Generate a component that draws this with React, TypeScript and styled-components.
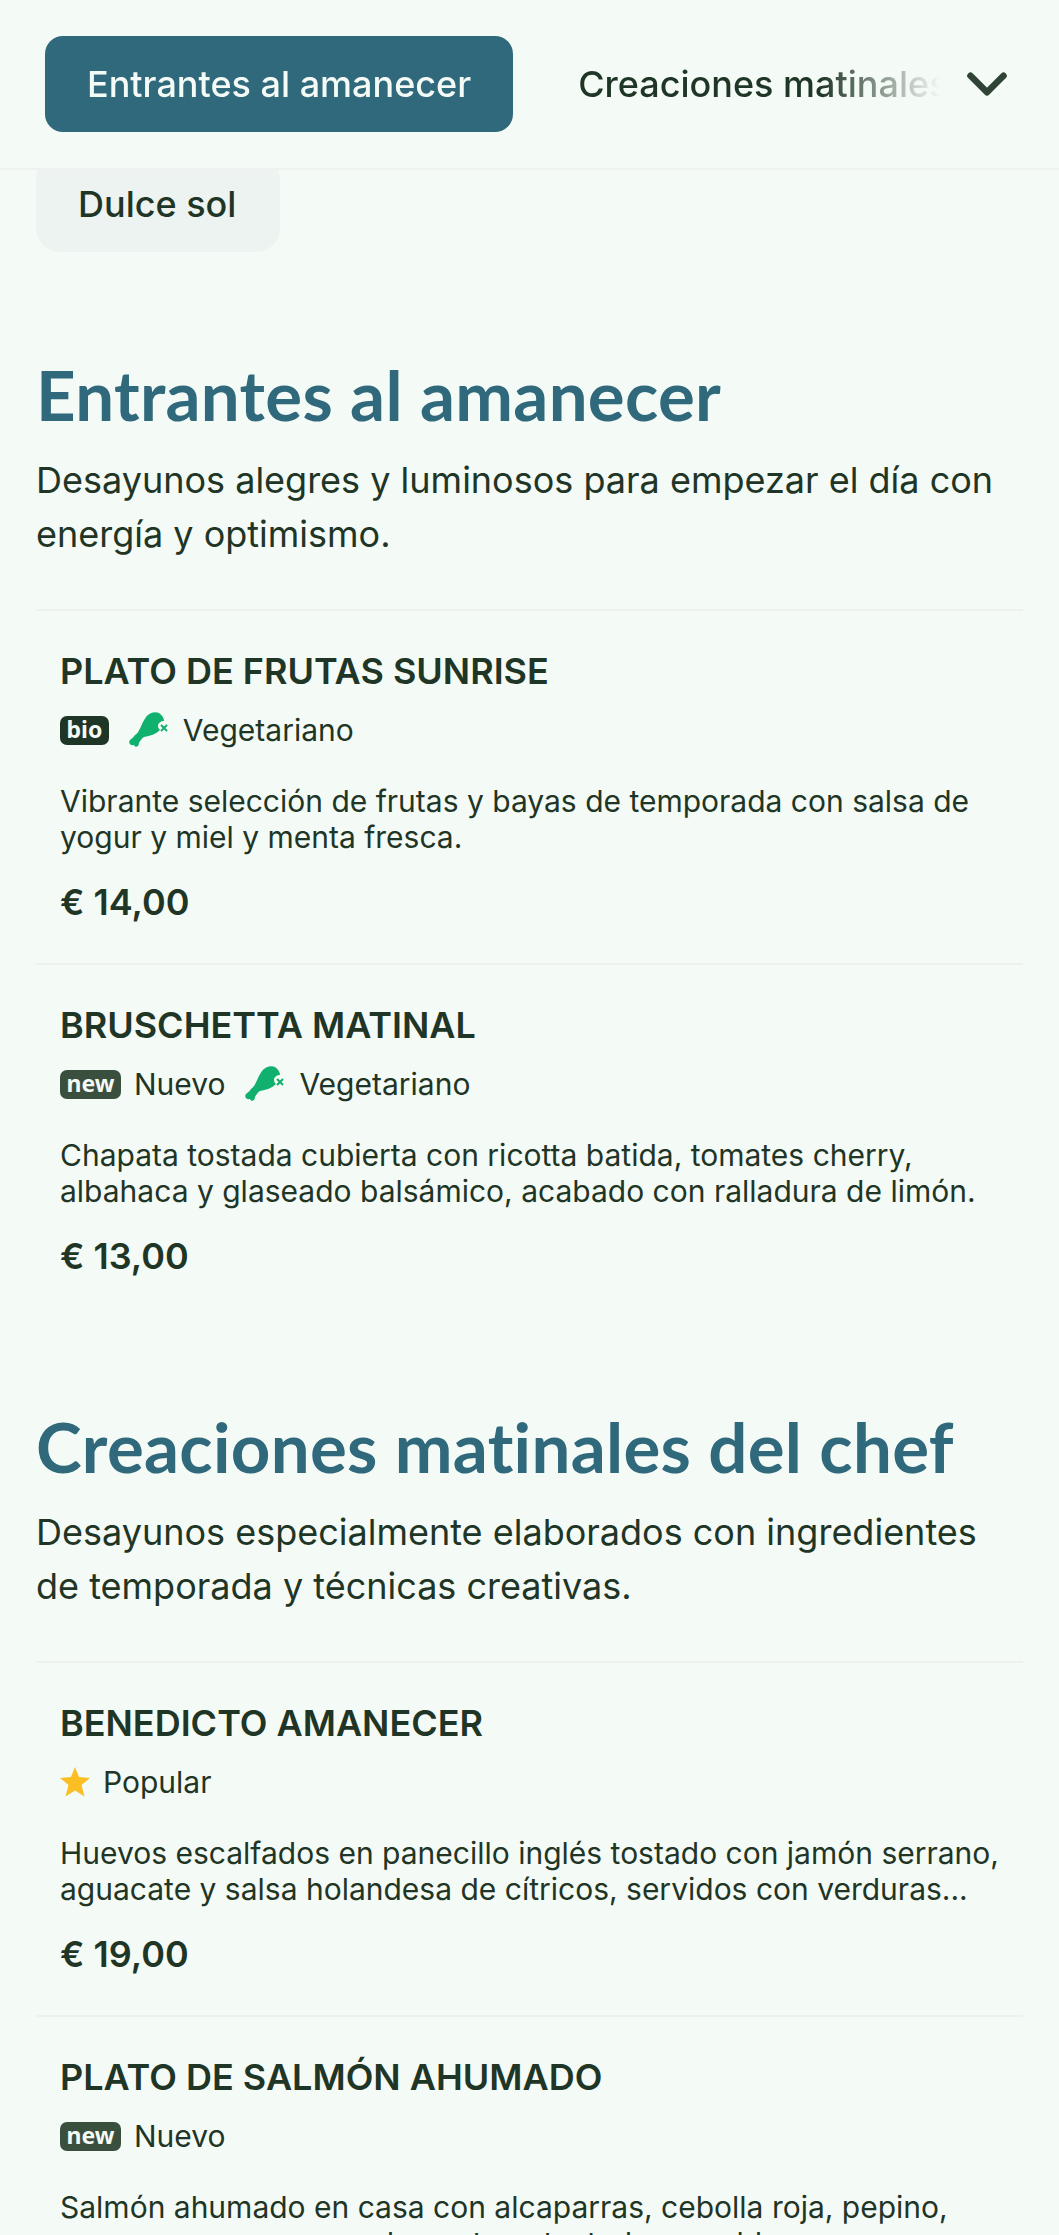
import React from 'react';
import styled, { createGlobalStyle } from 'styled-components';
import { ChevronDown } from 'lucide-react';

const GlobalStyle = createGlobalStyle`
  html, body {
    margin: 0;
    padding: 0;
    background-color: #f4faf5;
  }
  body {
    height: 2235px;
    overflow: hidden;
    font-family: Inter, 'Liberation Sans', sans-serif;
    color: #1f3526;
  }
`;

const Header = styled.header`
  position: relative;
  z-index: 2;
  display: flex;
  align-items: center;
  height: 170px;
  padding: 0 39px 0 45px;
  box-sizing: border-box;
  background-color: #f4faf5;
  border-bottom: 2px solid #edf2ee;
`;

const TabStrip = styled.div`
  flex: 1;
  display: flex;
  align-items: center;
  gap: 23px;
  overflow: hidden;
  white-space: nowrap;
  -webkit-mask-image: linear-gradient(to right, #000 775px, transparent 895px);
  mask-image: linear-gradient(to right, #000 775px, transparent 895px);
`;

const Tab = styled.div<{ $active?: boolean }>`
  flex: none;
  padding: 0 42px;
  height: 96px;
  display: flex;
  align-items: center;
  border-radius: 18px;
  font-size: 36px;
  font-weight: 500;
  background-color: ${props => (props.$active ? '#30687c' : 'transparent')};
  color: ${props => (props.$active ? '#f4faf5' : '#1f3526')};
`;

const Chevron = styled(ChevronDown)`
  flex: none;
  width: 66px;
  height: 66px;
  color: #2f4436;
`;

const Main = styled.main`
  padding: 0 36px;
`;

const SecondRow = styled.div`
  display: flex;
  margin-top: -14px;
`;

const Chip = styled.div`
  height: 96px;
  padding: 0 44px 0 42px;
  display: flex;
  align-items: center;
  border-radius: 24px;
  font-size: 36px;
  font-weight: 500;
  background-color: #edf3f0;
`;

const Section = styled.section`
  padding-top: 103px;

  & + & {
    padding-top: 90px;
  }
`;

const Heading = styled.h2`
  margin: 0;
  font-family: Lato, 'Noto Sans', sans-serif;
  font-size: 69px;
  line-height: 80px;
  letter-spacing: 0.3px;
  font-variant-ligatures: none;
  font-weight: 700;
  color: #30687c;
`;

const Intro = styled.p`
  margin: 18px 0 0;
  font-size: 36px;
  line-height: 54px;
`;

const List = styled.div`
  margin-top: 48px;
`;

const Item = styled.article`
  height: 354px;
  box-sizing: border-box;
  padding: 38px 24px 0;
  border-top: 2px solid #edf2ee;
`;

const Title = styled.h3`
  margin: 0;
  font-size: 36px;
  line-height: 44px;
  font-weight: 600;
`;

const Tags = styled.div`
  display: flex;
  align-items: center;
  gap: 19px;
  height: 44px;
  margin-top: 15px;
`;

const Tag = styled.span`
  display: flex;
  align-items: center;
  gap: 13px;
  font-size: 30px;
`;

const Badge = styled.span<{ $dark?: boolean }>`
  display: block;
  padding: 0 6.5px;
  height: 29px;
  line-height: 27px;
  border-radius: 7px;
  font-family: 'Noto Sans', sans-serif;
  font-size: 23px;
  font-weight: 700;
  color: #f4faf5;
  background-color: ${props => (props.$dark ? '#1f3526' : '#3b4f3f')};
`;

const Description = styled.p`
  margin: 31px 0 0;
  font-size: 30px;
  line-height: 36px;
`;

const Price = styled.div`
  margin-top: 25px;
  font-size: 36px;
  line-height: 44px;
  font-weight: 600;
`;

const DrumstickOff = () => (
  <svg width="42" height="36" viewBox="0 0 42 36" fill="#10b06e" aria-hidden="true">
    <path d="M7 23 C12 20 13 12 18 5 C21 1 27 -1 31 1 C34 3 36 6 36 9 C33 9 30 11 30 14 C30 16 31 17 32 18 C28 22 22 24 16 25 C14 26 12 29 11 31 C11 35 7 36 6 33 C2 34 0 30 2 28 C3 27 5 26 7 23 Z" />
    <path d="M33 13 L39 19 M39 13 L33 19" stroke="#10b06e" strokeWidth="2" fill="none" />
  </svg>
);

const Star = () => (
  <svg width="30" height="30" viewBox="0 0 30 30" fill="#fbbf24" aria-hidden="true">
    <path d="M15 0 L19 10 L30 11 L21.500 18 L24.500 29.500 L15 23.500 L5.500 29.500 L8.500 18 L0 11 L11 10 Z" />
  </svg>
);

type TagName = 'bio' | 'new' | 'veg' | 'popular';

const TagView: React.FC<{ name: TagName }> = ({ name }) => {
  if (name === 'bio') return <Tag><Badge $dark>bio</Badge></Tag>;
  if (name === 'new') return <Tag><Badge>new</Badge>Nuevo</Tag>;
  if (name === 'veg') return <Tag><DrumstickOff />Vegetariano</Tag>;
  return <Tag><Star />Popular</Tag>;
};

const sections = [
  {
    title: 'Entrantes al amanecer',
    intro: 'Desayunos alegres y luminosos para empezar el día con energía y optimismo.',
    items: [
      {
        name: 'PLATO DE FRUTAS SUNRISE',
        tags: ['bio', 'veg'] as TagName[],
        text: 'Vibrante selección de frutas y bayas de temporada con salsa de yogur y miel y menta fresca.',
        price: '€ 14,00',
      },
      {
        name: 'BRUSCHETTA MATINAL',
        tags: ['new', 'veg'] as TagName[],
        text: 'Chapata tostada cubierta con ricotta batida, tomates cherry, albahaca y glaseado balsámico, acabado con ralladura de limón.',
        price: '€ 13,00',
      },
    ],
  },
  {
    title: 'Creaciones matinales del chef',
    intro: 'Desayunos especialmente elaborados con ingredientes de temporada y técnicas creativas.',
    items: [
      {
        name: 'BENEDICTO AMANECER',
        tags: ['popular'] as TagName[],
        text: 'Huevos escalfados en panecillo inglés tostado con jamón serrano, aguacate y salsa holandesa de cítricos, servidos con verduras...',
        price: '€ 19,00',
      },
      {
        name: 'PLATO DE SALMÓN AHUMADO',
        tags: ['new'] as TagName[],
        text: 'Salmón ahumado en casa con alcaparras, cebolla roja, pepino, queso crema con pan de centeno tostado y eneldo.',
        price: '€ 21,00',
      },
    ],
  },
];

const App: React.FC = () => (
  <>
    <GlobalStyle />
    <Header>
      <TabStrip>
        <Tab $active>Entrantes al amanecer</Tab>
        <Tab>Creaciones matinales del chef</Tab>
      </TabStrip>
      <Chevron strokeWidth={2.4} />
    </Header>
    <Main>
      <SecondRow>
        <Chip>Dulce sol</Chip>
      </SecondRow>
      {sections.map(section => (
        <Section key={section.title}>
          <Heading>{section.title}</Heading>
          <Intro>{section.intro}</Intro>
          <List>
            {section.items.map(item => (
              <Item key={item.name}>
                <Title>{item.name}</Title>
                <Tags>
                  {item.tags.map(tag => <TagView key={tag} name={tag} />)}
                </Tags>
                <Description>{item.text}</Description>
                <Price>{item.price}</Price>
              </Item>
            ))}
          </List>
        </Section>
      ))}
    </Main>
  </>
);

export default App;
